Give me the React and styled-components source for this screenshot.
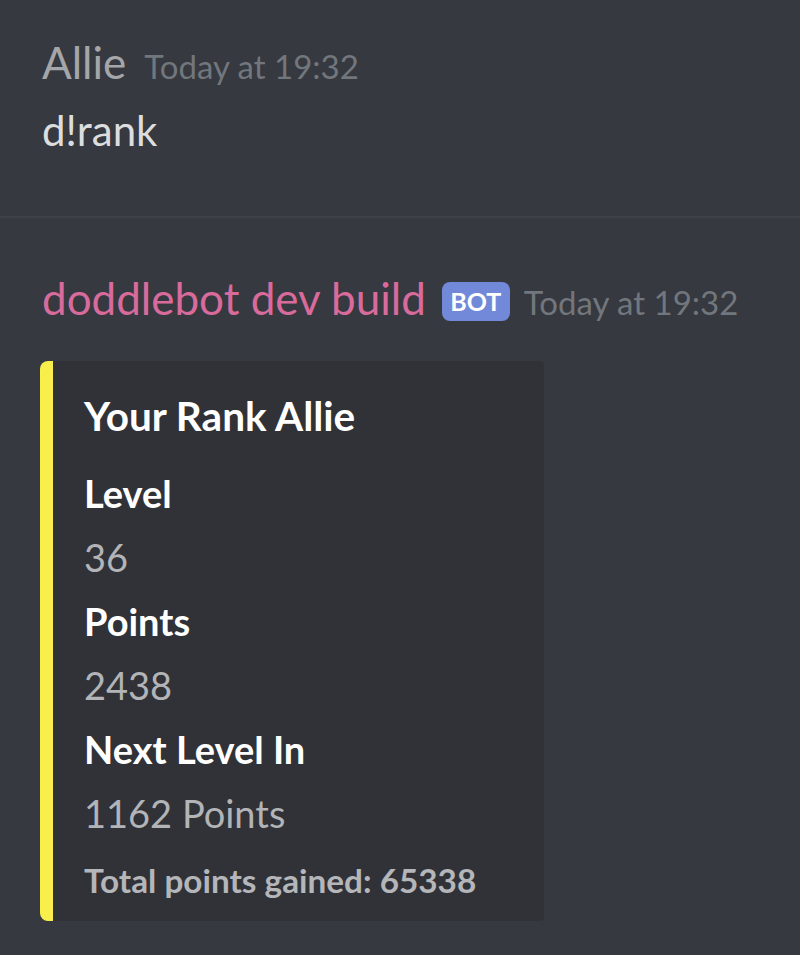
import React from 'react';
import styled, { createGlobalStyle } from 'styled-components';

const GlobalStyle = createGlobalStyle`
  html, body {
    margin: 0;
    padding: 0;
    background: #36393f;
  }
  body {
    font-family: Lato, "Open Sans", sans-serif;
    width: 800px;
    height: 955px;
    overflow: hidden;
  }
`;

const Chat = styled.div`
  display: flex;
  flex-direction: column;
`;

const Message = styled.div`
  display: flex;
  flex-direction: column;
  padding: ${p => p.$top}px 0 0 42px;
  padding-bottom: ${p => p.$bottom || 0}px;
  border-bottom: ${p => (p.$divider ? '2px solid #3d4046' : 'none')};
`;

const Header = styled.div`
  display: flex;
  align-items: baseline;
  height: 52px;
  line-height: 52px;
`;

const Username = styled.span`
  font-size: 44px;
  color: ${p => p.$color};
  white-space: nowrap;
`;

const BotTag = styled.span`
  display: inline-flex;
  align-items: center;
  justify-content: center;
  align-self: center;
  margin: 6px 0 0 16px;
  width: 68px;
  height: 39px;
  border-radius: 8px;
  background: #7289da;
  color: #ffffff;
  font-size: 25px;
  font-weight: 700;
  line-height: 1;
`;

const Timestamp = styled.span`
  margin-left: ${p => p.$gap}px;
  font-size: 33px;
  color: #72767d;
  white-space: nowrap;
`;

const Content = styled.div`
  margin-top: 17px;
  font-size: 42px;
  line-height: 50px;
  color: #dcddde;
`;

const Embed = styled.div`
  display: flex;
  flex-direction: column;
  width: 460px;
  margin: 37px 0 0 -2px;
  padding: 22px 0 16px 31px;
  background: #303238;
  border-left: 13px solid #f8ef4c;
  border-radius: 8px 4px 4px 8px;
`;

const Title = styled.div`
  font-size: 40.5px;
  font-weight: 700;
  line-height: 66px;
  color: #ffffff;
  margin-bottom: 12px;
`;

const FieldName = styled.div`
  font-size: 38px;
  font-weight: 700;
  line-height: 64px;
  color: #ffffff;
`;

const FieldValue = styled.div`
  font-size: 38px;
  line-height: 64px;
  color: #b2b4b7;
`;

const Footer = styled.div`
  margin-top: 10px;
  font-size: 33.3px;
  font-weight: 700;
  line-height: 50px;
  color: #b4b6b9;
`;

const fields = [
  { name: 'Level', value: '36' },
  { name: 'Points', value: '2438' },
  { name: 'Next Level In', value: '1162 Points' },
];

export default function App() {
  return (
    <>
      <GlobalStyle />
      <Chat>
        <Message $top={36} $bottom={61} $divider>
          <Header>
            <Username $color="#a4a6a9">Allie</Username>
            <Timestamp $gap={18}>Today at 19:32</Timestamp>
          </Header>
          <Content>d!rank</Content>
        </Message>
        <Message $top={54}>
          <Header>
            <Username $color="#d86b9c">doddlebot dev build</Username>
            <BotTag>BOT</BotTag>
            <Timestamp $gap={14}>Today at 19:32</Timestamp>
          </Header>
          <Embed>
            <Title>Your Rank Allie</Title>
            {fields.map(f => (
              <React.Fragment key={f.name}>
                <FieldName>{f.name}</FieldName>
                <FieldValue>{f.value}</FieldValue>
              </React.Fragment>
            ))}
            <Footer>Total points gained: 65338</Footer>
          </Embed>
        </Message>
      </Chat>
    </>
  );
}
